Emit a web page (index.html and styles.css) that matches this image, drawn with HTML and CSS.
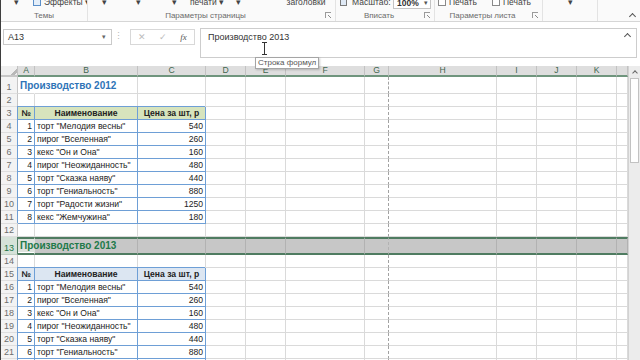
FILE: index.html
```html
<!DOCTYPE html>
<html>
<head lang="ru">
	<meta charset="UTF-8">
	<title>Книга1 - Excel</title>
	<link rel="stylesheet" href="styles.css">
</head>
<body>
<div class="app">

	<div class="ribbon">
		<div class="group g1">
			<div class="ctrls">
				<span class="btn w30">▾</span>
				<span class="btn pl2"><i class="ico ico-eff"></i>Эффекты ▾</span>
			</div>
			<div class="gname"><span>Темы</span></div>
		</div>
		<div class="group g2">
			<div class="ctrls">
				<span class="btn w32">▾</span>
				<span class="btn w37">▾</span>
				<span class="btn w35">▾</span>
				<span class="btn w30">печати ▾</span>
				<span class="btn w32">▾</span>
				<span class="btn w23"></span>
				<span class="btn w58">заголовки</span>
			</div>
			<div class="gname"><span>Параметры страницы</span><b class="launch"></b></div>
		</div>
		<div class="group g3">
			<div class="ctrls pl4">
				<span class="btn"><i class="ico ico-zoom"></i>Масштаб:</span>
				<span class="zoombox">100% <em>▾</em></span>
			</div>
			<div class="gname"><span>Вписать</span><b class="launch"></b></div>
		</div>
		<div class="group g4">
			<div class="ctrls pl3">
				<span class="btn w54 left"><i class="chk"></i>Печать</span>
				<span class="btn w54 left"><i class="chk"></i>Печать</span>
			</div>
			<div class="gname"><span>Параметры листа</span><b class="launch"></b></div>
		</div>
		<div class="group g5">
			<div class="ctrls"><span class="btn grow">▾</span></div>
			<div class="gname"></div>
		</div>
		<div class="group g6">
			<div class="ctrls"></div>
			<div class="gname end"><i class="chev"></i></div>
		</div>
	</div>

	<div class="fbar">
		<div class="namebox"><span>A13</span><em>▾</em></div>
		<div class="dots">⋮</div>
		<div class="fxbox"><span>✕</span><span>✓</span><span class="fx">fx</span></div>
		<div class="finput"><span>Производство 2013</span><i class="chev"></i></div>
	</div>

	<div class="sheet">
		<div class="grid">
			<div class="row hdr"><div class="corner"></div><div>A</div><div>B</div><div>C</div><div>D</div><div>E</div><div>F</div><div>G</div><div>H</div><div>I</div><div>J</div><div>K</div><div></div></div>
			<div class="row r17"><div class="rh">1</div><div class="title blue">Производство 2012</div><div></div><div></div><div></div><div></div><div></div><div></div><div></div><div></div><div></div><div></div><div></div></div>
			<div class="row"><div class="rh">2</div><div></div><div></div><div></div><div></div><div></div><div></div><div></div><div></div><div></div><div></div><div></div><div></div></div>
			<div class="row green"><div class="rh">3</div><div class="tb th">№</div><div class="tb th">Наименование</div><div class="tb th">Цена за шт, р</div><div></div><div></div><div></div><div></div><div></div><div></div><div></div><div></div><div></div></div>
			<div class="row"><div class="rh">4</div><div class="tb n">1</div><div class="tb">торт "Мелодия весны"</div><div class="tb n">540</div><div></div><div></div><div></div><div></div><div></div><div></div><div></div><div></div><div></div></div>
			<div class="row"><div class="rh">5</div><div class="tb n">2</div><div class="tb">пирог "Вселенная"</div><div class="tb n">260</div><div></div><div></div><div></div><div></div><div></div><div></div><div></div><div></div><div></div></div>
			<div class="row"><div class="rh">6</div><div class="tb n">3</div><div class="tb">кекс "Он и Она"</div><div class="tb n">160</div><div></div><div></div><div></div><div></div><div></div><div></div><div></div><div></div><div></div></div>
			<div class="row"><div class="rh">7</div><div class="tb n">4</div><div class="tb">пирог "Неожиданность"</div><div class="tb n">480</div><div></div><div></div><div></div><div></div><div></div><div></div><div></div><div></div><div></div></div>
			<div class="row"><div class="rh">8</div><div class="tb n">5</div><div class="tb">торт "Сказка наяву"</div><div class="tb n">440</div><div></div><div></div><div></div><div></div><div></div><div></div><div></div><div></div><div></div></div>
			<div class="row"><div class="rh">9</div><div class="tb n">6</div><div class="tb">торт "Гениальность"</div><div class="tb n">880</div><div></div><div></div><div></div><div></div><div></div><div></div><div></div><div></div><div></div></div>
			<div class="row"><div class="rh">10</div><div class="tb n">7</div><div class="tb">торт "Радости жизни"</div><div class="tb n">1250</div><div></div><div></div><div></div><div></div><div></div><div></div><div></div><div></div><div></div></div>
			<div class="row"><div class="rh">11</div><div class="tb n">8</div><div class="tb">кекс "Жемчужина"</div><div class="tb n">180</div><div></div><div></div><div></div><div></div><div></div><div></div><div></div><div></div><div></div></div>
			<div class="row"><div class="rh">12</div><div></div><div></div><div></div><div></div><div></div><div></div><div></div><div></div><div></div><div></div><div></div><div></div></div>
			<div class="row sel"><div class="rh">13</div><div class="title active">Производство 2013</div><div></div><div></div><div></div><div></div><div></div><div></div><div></div><div></div><div></div><div></div><div></div></div>
			<div class="row"><div class="rh">14</div><div></div><div></div><div></div><div></div><div></div><div></div><div></div><div></div><div></div><div></div><div></div><div></div></div>
			<div class="row bluehd"><div class="rh">15</div><div class="tb th">№</div><div class="tb th">Наименование</div><div class="tb th">Цена за шт, р</div><div></div><div></div><div></div><div></div><div></div><div></div><div></div><div></div><div></div></div>
			<div class="row"><div class="rh">16</div><div class="tb n">1</div><div class="tb">торт "Мелодия весны"</div><div class="tb n">540</div><div></div><div></div><div></div><div></div><div></div><div></div><div></div><div></div><div></div></div>
			<div class="row"><div class="rh">17</div><div class="tb n">2</div><div class="tb">пирог "Вселенная"</div><div class="tb n">260</div><div></div><div></div><div></div><div></div><div></div><div></div><div></div><div></div><div></div></div>
			<div class="row"><div class="rh">18</div><div class="tb n">3</div><div class="tb">кекс "Он и Она"</div><div class="tb n">160</div><div></div><div></div><div></div><div></div><div></div><div></div><div></div><div></div><div></div></div>
			<div class="row"><div class="rh">19</div><div class="tb n">4</div><div class="tb">пирог "Неожиданность"</div><div class="tb n">480</div><div></div><div></div><div></div><div></div><div></div><div></div><div></div><div></div><div></div></div>
			<div class="row"><div class="rh">20</div><div class="tb n">5</div><div class="tb">торт "Сказка наяву"</div><div class="tb n">440</div><div></div><div></div><div></div><div></div><div></div><div></div><div></div><div></div><div></div></div>
			<div class="row"><div class="rh">21</div><div class="tb n">6</div><div class="tb">торт "Гениальность"</div><div class="tb n">880</div><div></div><div></div><div></div><div></div><div></div><div></div><div></div><div></div><div></div></div>
			<div class="row"><div class="rh">22</div><div class="tb n">7</div><div class="tb">торт "Радости жизни"</div><div class="tb n">1250</div><div></div><div></div><div></div><div></div><div></div><div></div><div></div><div></div><div></div></div>
		</div>
		<div class="vscroll">
			<div class="up"><i class="chev"></i></div>
			<div class="thumb"></div>
		</div>
	</div>

	<svg class="ibeam" width="7" height="13" viewBox="0 0 7 13"><path d="M1 .5h5M3.5 .5v12M1 12.5h5" stroke="#333" fill="none"/></svg>
	<div class="tip">Строка формул</div>
</div>
</body>
</html>
```

FILE: styles.css
```css
* {
	box-sizing: border-box;
	margin: 0;
	padding: 0;
	font-family: "Liberation Sans", Arial, sans-serif;
}

html, body {
	width: 640px;
	height: 360px;
	overflow: hidden;
	background: #fff;
}

.app {
	position: relative;
	height: 360px;
	border-left: 1px solid #3e3e3e;
	color: #222;
}

i, em, b {
	font-style: normal;
	display: inline-block;
}

/* ribbon */

.ribbon {
	display: flex;
	height: 22px;
	background: #fafafa;
	border-bottom: 1px solid #d6d6d6;
}

.group {
	display: flex;
	flex-direction: column;
	flex: none;
	border-right: 1px solid #e3e3e3;
}

.g1 { width: 87px; }
.g2 { width: 248px; }
.g3 { width: 99px; }
.g4 { width: 108px; }
.g5 { width: 55px; }
.g6 { flex: 1; border-right: none; }

.ctrls {
	display: flex;
	align-items: flex-end;
	height: 9px;
	overflow: hidden;
}

.pl3 { padding-left: 3px; }
.pl4 { padding-left: 4px; padding-right: 3px; }

.btn {
	display: flex;
	align-items: center;
	justify-content: center;
	flex: none;
	height: 15px;
	font-size: 8.5px;
	color: #444;
	white-space: nowrap;
}

.btn.left { justify-content: flex-start; }
.btn.grow { flex: 1; }
.pl2 { padding-left: 2px; }

.w23 { width: 23px; }
.w30 { width: 30px; }
.w32 { width: 32px; }
.w35 { width: 35px; }
.w37 { width: 37px; }
.w54 { width: 54px; }
.w58 { width: 58px; }

.ico {
	width: 8px;
	height: 8px;
	margin-right: 3px;
	border: 1px solid #5b8fc9;
	background: #e4eef9;
}

.ico-zoom {
	width: 7px;
	margin-right: 5px;
	border-color: #7a7a7a;
	background: #dfe9f5;
}

.chk {
	width: 8px;
	height: 8px;
	margin-right: 3px;
	border: 1px solid #8a8a8a;
	background: #fff;
}

.zoombox {
	display: flex;
	align-items: center;
	justify-content: space-between;
	width: 38px;
	height: 13px;
	margin-left: auto;
	padding: 0 2px 0 3px;
	border: 1px solid #c4c4c4;
	background: #fff;
	font-size: 8.5px;
	font-weight: bold;
	color: #333;
}

.zoombox em {
	font-size: 7px;
	font-weight: normal;
	color: #555;
}

.gname {
	display: flex;
	align-items: center;
	flex: 1;
	font-size: 8px;
	color: #6b6b6b;
}

.gname span {
	flex: 1;
	text-align: center;
	white-space: nowrap;
}

.gname.end {
	justify-content: flex-end;
	padding-right: 5px;
}

.launch {
	width: 6px;
	height: 6px;
	margin: 0 4px 0 2px;
	border-left: 1px solid #9a9a9a;
	border-top: 1px solid #9a9a9a;
	background: linear-gradient(45deg, transparent 45%, #8a8a8a 45%, #8a8a8a 60%, transparent 60%) 2px 2px / 4px 4px no-repeat;
}

.chev {
	width: 5px;
	height: 5px;
	margin-top: 2px;
	border-left: 1.5px solid #555;
	border-top: 1.5px solid #555;
	transform: rotate(45deg);
}

/* formula bar */

.fbar {
	display: flex;
	align-items: flex-start;
	height: 40px;
	padding: 6px 3px 0 2px;
	background: #fff;
}

.namebox {
	display: flex;
	align-items: center;
	justify-content: space-between;
	width: 109px;
	height: 16px;
	margin-top: 1px;
	padding: 0 5px 0 4px;
	border: 1px solid #cacaca;
	font-size: 9px;
	color: #333;
}

.namebox em {
	font-size: 7px;
	color: #666;
}

.dots {
	width: 12px;
	margin-top: 3px;
	text-align: center;
	font-size: 9px;
	color: #b8b8b8;
}

.fxbox {
	display: flex;
	align-items: center;
	width: 65px;
	height: 16px;
	margin: 1px 0 0 6px;
	border: 1px solid #d8d8d8;
	font-size: 9px;
	color: #bcbcbc;
}

.fxbox span {
	flex: 1;
	text-align: center;
}

.fxbox .fx {
	font-family: "Liberation Serif", serif;
	font-style: italic;
	color: #555;
}

.finput {
	display: flex;
	justify-content: space-between;
	flex: 1;
	height: 30px;
	margin-left: 5px;
	padding: 3px 6px 0 7px;
	border: 1px solid #cdcdcd;
	font-size: 9px;
	line-height: 11px;
	color: #333;
}

/* sheet */

.sheet {
	display: flex;
	margin-top: 4px;
	height: 294px;
	overflow: hidden;
}

.grid {
	display: grid;
	grid-template-columns: 17px 17px 103px 68px 40px 40px 79px 24px 108px 40px 40px 40px 11px;
	grid-template-rows: 11px 17px repeat(11, 13px) 18px repeat(9, 13px);
	flex: none;
	font-size: 8.6px;
	line-height: 12px;
}

.row {
	display: contents;
}

.row > div {
	display: flex;
	align-items: flex-end;
	padding: 0 2px;
	border-right: 1px solid #dadada;
	border-bottom: 1px solid #dadada;
	white-space: nowrap;
}

.row > div:nth-child(8) {
	border-right: 1px dashed #a2a2a2;
}

.hdr > div,
.hdr > div:nth-child(8) {
	justify-content: center;
	align-items: center;
	background: #dedede;
	border-right: 1px solid #c2c2c2;
	border-bottom: 2px solid #6f957d;
	color: #41664f;
	line-height: 9px;
}

.hdr > .corner {
	background: #efefef linear-gradient(135deg, transparent 72%, #b8b8b8 72%, #b8b8b8 88%, transparent 88%);
	border-bottom-color: #c6c6c6;
}

.row > .rh {
	justify-content: center;
	background: #f3f3f3;
	border-right: 1px solid #c6c6c6;
	border-bottom: 1px solid #dedede;
	color: #6d6d6d;
	font-size: 9px;
}

.row > .title {
	z-index: 1;
	border-right-color: transparent;
	font-size: 10px;
	line-height: 15px;
	font-weight: bold;
}

.blue {
	color: #2e74b7;
}

.row > .tb {
	border-right: 1px solid #6e9fd6;
	border-bottom: 1px solid #6e9fd6;
	box-shadow: -1px -1px 0 #6e9fd6;
}

.row > .n {
	justify-content: flex-end;
}

.row > .th {
	justify-content: center;
	font-weight: bold;
}

.green > .th {
	background: #d7e4bd;
}

.bluehd > .th {
	background: #dce6f2;
}

.sel > div,
.sel > div:nth-child(8) {
	background: #c7c7c7;
	border-top: 2px solid #4f7c61;
	border-bottom: 2px solid #4f7c61;
	border-right-color: #b2b2b2;
}

.sel > .rh {
	background: #d5e2d8;
	border-top: none;
	border-bottom: 1px solid #c0cfc4;
	border-right: 1px solid #4f7c61;
	color: #217346;
}

.sel > .title {
	border-right-color: transparent;
	color: #217a4a;
}

.sel > .active {
	background: #dde2dd;
	box-shadow: inset 0 -2px 0 -1px #fff;
}

.vscroll {
	flex: 1;
	background: #ececec;
	border-left: 1px solid #d2d2d2;
}

.vscroll .up {
	display: flex;
	justify-content: center;
	align-items: center;
	height: 11px;
}

.vscroll .chev {
	width: 4px;
	height: 4px;
	border-width: 1.5px;
	border-color: #666;
}

.thumb {
	height: 85px;
	margin: 1px 1px 0;
	background: #fff;
	border: 1px solid #c2c2c2;
}

/* overlays */

.ibeam {
	position: absolute;
	left: 260px;
	top: 42px;
}

.tip {
	position: absolute;
	left: 254px;
	top: 57px;
	padding: 0 2px;
	background: #fff;
	border: 1px solid #a5a5a5;
	box-shadow: 1px 1px 2px rgba(0, 0, 0, .2);
	font-size: 8px;
	line-height: 10px;
	color: #555;
	white-space: nowrap;
}
```
